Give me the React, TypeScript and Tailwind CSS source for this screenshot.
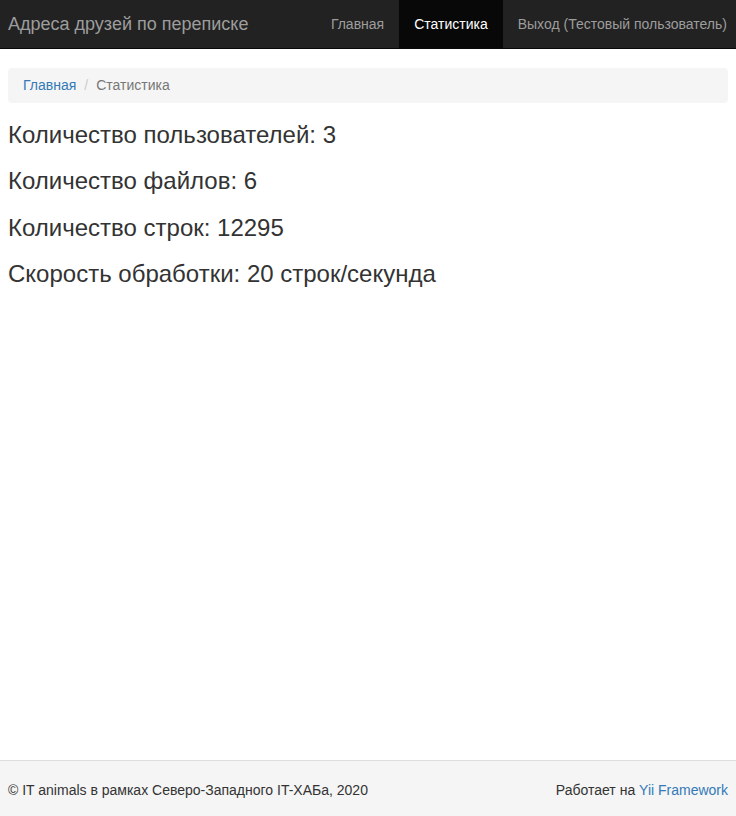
export default function App() {
  const stats = [
    "Количество пользователей: 3",
    "Количество файлов: 6",
    "Количество строк: 12295",
    "Скорость обработки: 20 строк/секунда",
  ];

  return (
    <div className="min-h-screen flex flex-col bg-white font-['Liberation_Sans',Arial,sans-serif] text-[14px] text-[#333]">
      {/* Navbar */}
      <nav className="h-[49px] bg-[#222] border-b border-[#080808] flex items-stretch justify-between pl-2">
        <a className="flex items-center text-[18px] text-[#9d9d9d]">Адреса друзей по переписке</a>
        <ul className="flex items-stretch">
          <li className="flex items-center pl-[16px] pr-[15px] text-[#9d9d9d]">Главная</li>
          <li className="flex items-center px-[15px] bg-[#080808] text-white">Статистика</li>
          <li className="flex items-center pl-[15px] pr-[9px] text-[#9d9d9d]">Выход (Тестовый пользователь)</li>
        </ul>
      </nav>

      {/* Content */}
      <main className="flex-1 px-2 pt-[19px]">
        <ol className="flex items-center h-[35px] px-[15px] bg-[#f5f5f5] rounded mb-[10px]">
          <li className="text-[#337ab7]">Главная</li>
          <li className="px-[8px] text-[#ccc]">/</li>
          <li className="text-[#777]">Статистика</li>
        </ol>
        <div className="-mt-px">
          {stats.map((s) => (
            <h3 key={s} className="text-[24px] leading-[26.4px] mt-5 mb-[10px] font-normal">
              {s}
            </h3>
          ))}
        </div>
      </main>

      {/* Footer */}
      <footer className="h-[56px] bg-[#f5f5f5] border-t border-[#ddd] flex items-center justify-between px-2 pt-1">
        <p>© IT animals в рамках Северо-Западного IT-ХАБа, 2020</p>
        <p>
          Работает на <a className="text-[#337ab7]">Yii Framework</a>
        </p>
      </footer>
    </div>
  );
}
